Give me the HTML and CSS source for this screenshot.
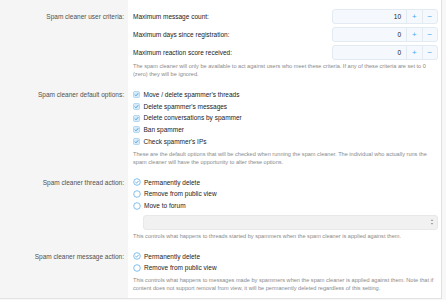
FILE: index.html
```html
<!DOCTYPE html>
<html lang="en">
<head>
  <meta charset="UTF-8">
  <title>Spam cleaner options</title>
  <link rel="stylesheet" href="styles.css">
</head>
<body>
  <div class="form">
    <dl class="row first">
      <dt>Spam cleaner user criteria:</dt>
      <dd>
        <div class="crit">
          <span>Maximum message count:</span>
          <div class="spin"><span class="val">10</span><span class="btn">+</span><span class="btn">&minus;</span></div>
        </div>
        <div class="crit">
          <span>Maximum days since registration:</span>
          <div class="spin"><span class="val">0</span><span class="btn">+</span><span class="btn">&minus;</span></div>
        </div>
        <div class="crit">
          <span>Maximum reaction score received:</span>
          <div class="spin"><span class="val">0</span><span class="btn">+</span><span class="btn">&minus;</span></div>
        </div>
        <p class="explain">The spam cleaner will only be available to act against users who meet these criteria. If any of these criteria are set to 0 (zero) they will be ignored.</p>
      </dd>
    </dl>

    <dl class="row">
      <dt>Spam cleaner default options:</dt>
      <dd>
        <ul class="choices">
          <li><svg class="box" viewBox="0 0 7 7"><rect x="0.5" y="0.5" width="6" height="6" rx="1" fill="#d6eaf9" stroke="#9ccbee" stroke-width="0.7"/><path d="M1.8 3.6 L3 4.8 L5.3 2.2" fill="none" stroke="#3d9be0" stroke-width="0.9"/></svg>Move / delete spammer's threads</li>
          <li><svg class="box" viewBox="0 0 7 7"><rect x="0.5" y="0.5" width="6" height="6" rx="1" fill="#d6eaf9" stroke="#9ccbee" stroke-width="0.7"/><path d="M1.8 3.6 L3 4.8 L5.3 2.2" fill="none" stroke="#3d9be0" stroke-width="0.9"/></svg>Delete spammer's messages</li>
          <li><svg class="box" viewBox="0 0 7 7"><rect x="0.5" y="0.5" width="6" height="6" rx="1" fill="#d6eaf9" stroke="#9ccbee" stroke-width="0.7"/><path d="M1.8 3.6 L3 4.8 L5.3 2.2" fill="none" stroke="#3d9be0" stroke-width="0.9"/></svg>Delete conversations by spammer</li>
          <li><svg class="box" viewBox="0 0 7 7"><rect x="0.5" y="0.5" width="6" height="6" rx="1" fill="#d6eaf9" stroke="#9ccbee" stroke-width="0.7"/><path d="M1.8 3.6 L3 4.8 L5.3 2.2" fill="none" stroke="#3d9be0" stroke-width="0.9"/></svg>Ban spammer</li>
          <li><svg class="box" viewBox="0 0 7 7"><rect x="0.5" y="0.5" width="6" height="6" rx="1" fill="#d6eaf9" stroke="#9ccbee" stroke-width="0.7"/><path d="M1.8 3.6 L3 4.8 L5.3 2.2" fill="none" stroke="#3d9be0" stroke-width="0.9"/></svg>Check spammer's IPs</li>
        </ul>
        <p class="explain">These are the default options that will be checked when running the spam cleaner. The individual who actually runs the spam cleaner will have the opportunity to alter these options.</p>
      </dd>
    </dl>

    <dl class="row">
      <dt>Spam cleaner thread action:</dt>
      <dd>
        <ul class="choices">
          <li><svg class="radio" viewBox="0 0 8 8"><circle cx="4" cy="4" r="3.3" fill="#fff" stroke="#62b1ea" stroke-width="0.8"/><path d="M2.4 4.1 L3.5 5.1 L5.6 2.9" fill="none" stroke="#3d9be0" stroke-width="0.8"/></svg>Permanently delete</li>
          <li><svg class="radio" viewBox="0 0 8 8"><circle cx="4" cy="4" r="3.3" fill="#fff" stroke="#62b1ea" stroke-width="0.8"/></svg>Remove from public view</li>
          <li><svg class="radio" viewBox="0 0 8 8"><circle cx="4" cy="4" r="3.3" fill="#fff" stroke="#62b1ea" stroke-width="0.8"/></svg>Move to forum</li>
        </ul>
        <div class="select">
          <svg class="arrows" viewBox="0 0 4 8"><path d="M0.6 3 L2 1.2 L3.4 3 Z M0.6 5 L2 6.8 L3.4 5 Z" fill="#a0a0a0"/></svg>
        </div>
        <p class="explain">This controls what happens to threads started by spammers when the spam cleaner is applied against them.</p>
      </dd>
    </dl>

    <dl class="row">
      <dt>Spam cleaner message action:</dt>
      <dd>
        <ul class="choices">
          <li><svg class="radio" viewBox="0 0 8 8"><circle cx="4" cy="4" r="3.3" fill="#fff" stroke="#62b1ea" stroke-width="0.8"/><path d="M2.4 4.1 L3.5 5.1 L5.6 2.9" fill="none" stroke="#3d9be0" stroke-width="0.8"/></svg>Permanently delete</li>
          <li><svg class="radio" viewBox="0 0 8 8"><circle cx="4" cy="4" r="3.3" fill="#fff" stroke="#62b1ea" stroke-width="0.8"/></svg>Remove from public view</li>
        </ul>
        <p class="explain">This controls what happens to messages made by spammers when the spam cleaner is applied against them. Note that if content does not support removal from view, it will be permanently deleted regardless of this setting.</p>
      </dd>
    </dl>
  </div>
</body>
</html>
```

FILE: styles.css
```css
body {
  margin: 0;
  background: #f7f7f7;
  font-family: "Liberation Sans", Arial, sans-serif;
  font-size: 6.5px;
  color: #222;
}

.form {
  width: 441px;
  background: #fff;
  border-right: 1px solid #e0e0e0;
  border-bottom: 1px solid #e3e3e3;
}

.row {
  display: grid;
  grid-template-columns: 128px 1fr;
  margin: 0;
}

.row dt {
  background: #f5f5f5;
  color: #505050;
  text-align: right;
  padding: 5.5px 4px 0 0;
  line-height: 11.7px;
}

.row dd {
  margin: 0;
  padding: 5.5px 3px 5.5px 5px;
  min-width: 0;
}

.row.first dt {
  padding-top: 9px;
  line-height: 15px;
}

.row.first dd {
  padding-top: 9px;
}

/* number criteria */
.crit {
  display: flex;
  justify-content: space-between;
  align-items: center;
  height: 15px;
  margin-bottom: 3px;
}

.crit:nth-child(3) {
  margin-bottom: 0;
}

.spin {
  display: flex;
  width: 106px;
  height: 15px;
  box-sizing: border-box;
  border: 1px solid #e2eaf2;
  border-radius: 3px;
  background: #f5f9fd;
}

.spin .val {
  flex: 1;
  text-align: right;
  padding-right: 5px;
  line-height: 13px;
}

.spin .btn {
  width: 14.5px;
  text-align: center;
  line-height: 13px;
  font-size: 8px;
  color: #47a7eb;
  border-left: 1px solid #e2eaf2;
}

/* check / radio lists */
.choices {
  list-style: none;
  margin: 0;
  padding: 0;
}

.choices li {
  display: flex;
  align-items: center;
  line-height: 11.7px;
}

.box {
  width: 7px;
  height: 7px;
  margin-right: 3.5px;
}

.radio {
  width: 8px;
  height: 8px;
  margin-right: 3px;
}

.select {
  display: flex;
  justify-content: flex-end;
  align-items: center;
  height: 15px;
  box-sizing: border-box;
  margin: 3px 0 0 10px;
  padding-right: 3px;
  background: #f1f1f1;
  border: 1px solid #e8e8e8;
  border-radius: 3px;
}

.arrows {
  width: 4px;
  height: 8px;
}

.explain {
  margin: 2px 0 0;
  font-size: 5.6px;
  line-height: 8px;
  color: #8a8a8a;
}
```
